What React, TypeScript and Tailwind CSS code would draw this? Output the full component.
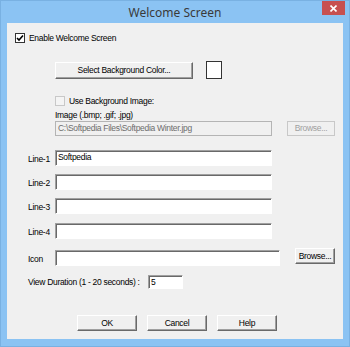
import React from "react";

const ui = { fontFamily: '"Liberation Sans", Arial, sans-serif' };

const raised =
  "border border-t-white border-l-white border-r-[#696969] border-b-[#696969] bg-[#f0f0f0] shadow-[inset_-1px_-1px_0_#a0a0a0] flex items-center justify-center leading-none whitespace-nowrap";

const sunken =
  "border border-t-[#a0a0a0] border-l-[#a0a0a0] border-r-white border-b-white shadow-[inset_1px_1px_0_#696969] leading-none pl-[2px] pt-[2px] whitespace-nowrap";

function Check({ checked, disabled }: { checked?: boolean; disabled?: boolean }) {
  return (
    <span
      className={`w-[10px] h-[10px] shrink-0 flex items-center justify-center border ${
        disabled ? "border-[#c8c8c8] bg-[#f4f4f4]" : "border-[#333] bg-white"
      }`}
    >
      {checked && (
        <svg width="8" height="8" viewBox="0 0 8 8">
          <path d="M1 4 L3 6 L7 1.5" stroke="#000" strokeWidth="1.6" fill="none" />
        </svg>
      )}
    </span>
  );
}

function LineRow({ label, value, mt }: { label: string; value?: string; mt: string }) {
  return (
    <div className={`flex items-end pl-[21px] ${mt}`}>
      <span className="w-[27px] leading-[12px] mb-[1px] whitespace-nowrap">{label}</span>
      <div className={`w-[217px] h-[16px] bg-white ${sunken}`}>{value}</div>
    </div>
  );
}

export default function App() {
  return (
    <div
      className="w-[350px] h-[347px] bg-[#8bc3f3] border border-[#79b1e2] flex flex-col text-black text-[8.5px] tracking-[-0.3px] overflow-hidden"
      style={ui}
    >
      <div className="h-[22px] shrink-0 relative flex items-center justify-center">
        <span
          className="text-[12px] tracking-normal text-[#3a3a3a] leading-none mt-[1px]"
          style={{ fontFamily: '"Noto Sans", "Open Sans", sans-serif' }}
        >
          Welcome Screen
        </span>
        <div className="absolute right-[4px] top-0 w-[23px] h-[14px] bg-[#c75050] flex items-center justify-center">
          <svg width="7" height="7" viewBox="0 0 7 7">
            <path d="M0.5 0.5 L6.5 6.5 M6.5 0.5 L0.5 6.5" stroke="#fff" strokeWidth="1.6" />
          </svg>
        </div>
      </div>

      <div className="mx-[6px] mb-[7px] flex-1 bg-[#f0f0f0] flex flex-col">
        <div className="flex items-center pt-[10px] pl-[8px] gap-[4px]">
          <Check checked />
          <span className="leading-none whitespace-nowrap">Enable Welcome Screen</span>
        </div>

        <div className="flex items-center pl-[48px] mt-[18px] h-[18px]">
          <div className={`w-[138px] h-[17px] ${raised}`}>Select Background Color...</div>
          <div className="ml-[13px] w-[16px] h-[18px] bg-white border border-[#333]" />
        </div>

        <div className="flex items-center pl-[48px] mt-[17px] gap-[4px] h-[10px]">
          <Check disabled />
          <span className="leading-none whitespace-nowrap">Use Background Image:</span>
        </div>

        <div className="pl-[48px] mt-[3px] h-[12px] leading-[12px] whitespace-nowrap">Image (.bmp; .gif; .jpg)</div>

        <div className="flex items-center pl-[48px]">
          <div className="w-[217px] h-[15px] bg-[#f0f0f0] text-[#6d6d6d] border border-[#b4b4b4] leading-none pl-[2px] pt-[2px] whitespace-nowrap">
            C:\Softpedia Files\Softpedia Winter.jpg
          </div>
          <div className="ml-[15px] w-[48px] h-[15px] border border-[#c8c8c8] bg-[#f0f0f0] text-[#a0a0a0] flex items-center justify-center leading-none">
            Browse...
          </div>
        </div>

        <LineRow label="Line-1" value="Softpedia" mt="mt-[14px]" />
        <LineRow label="Line-2" mt="mt-[8px]" />
        <LineRow label="Line-3" mt="mt-[8px]" />
        <LineRow label="Line-4" mt="mt-[9px]" />

        <div className="flex items-start pl-[21px] mt-[9px]">
          <span className="w-[27px] leading-[12px] mt-[5px]">Icon</span>
          <div className={`w-[225px] h-[16px] bg-white mt-[2px] ${sunken}`} />
          <div className={`ml-[15px] w-[40px] h-[16px] ${raised}`}>Browse...</div>
        </div>

        <div className="flex items-center pl-[21px] mt-[9px]">
          <span className="w-[120px] leading-none whitespace-nowrap">View Duration (1 - 20 seconds) :</span>
          <div className={`w-[35px] h-[14px] bg-white ${sunken}`}>5</div>
        </div>

        <div className="flex pl-[70px] mt-[26px] gap-[10px]">
          <div className={`w-[60px] h-[16px] ${raised}`}>OK</div>
          <div className={`w-[60px] h-[16px] ${raised}`}>Cancel</div>
          <div className={`w-[60px] h-[16px] ${raised}`}>Help</div>
        </div>
      </div>
    </div>
  );
}
